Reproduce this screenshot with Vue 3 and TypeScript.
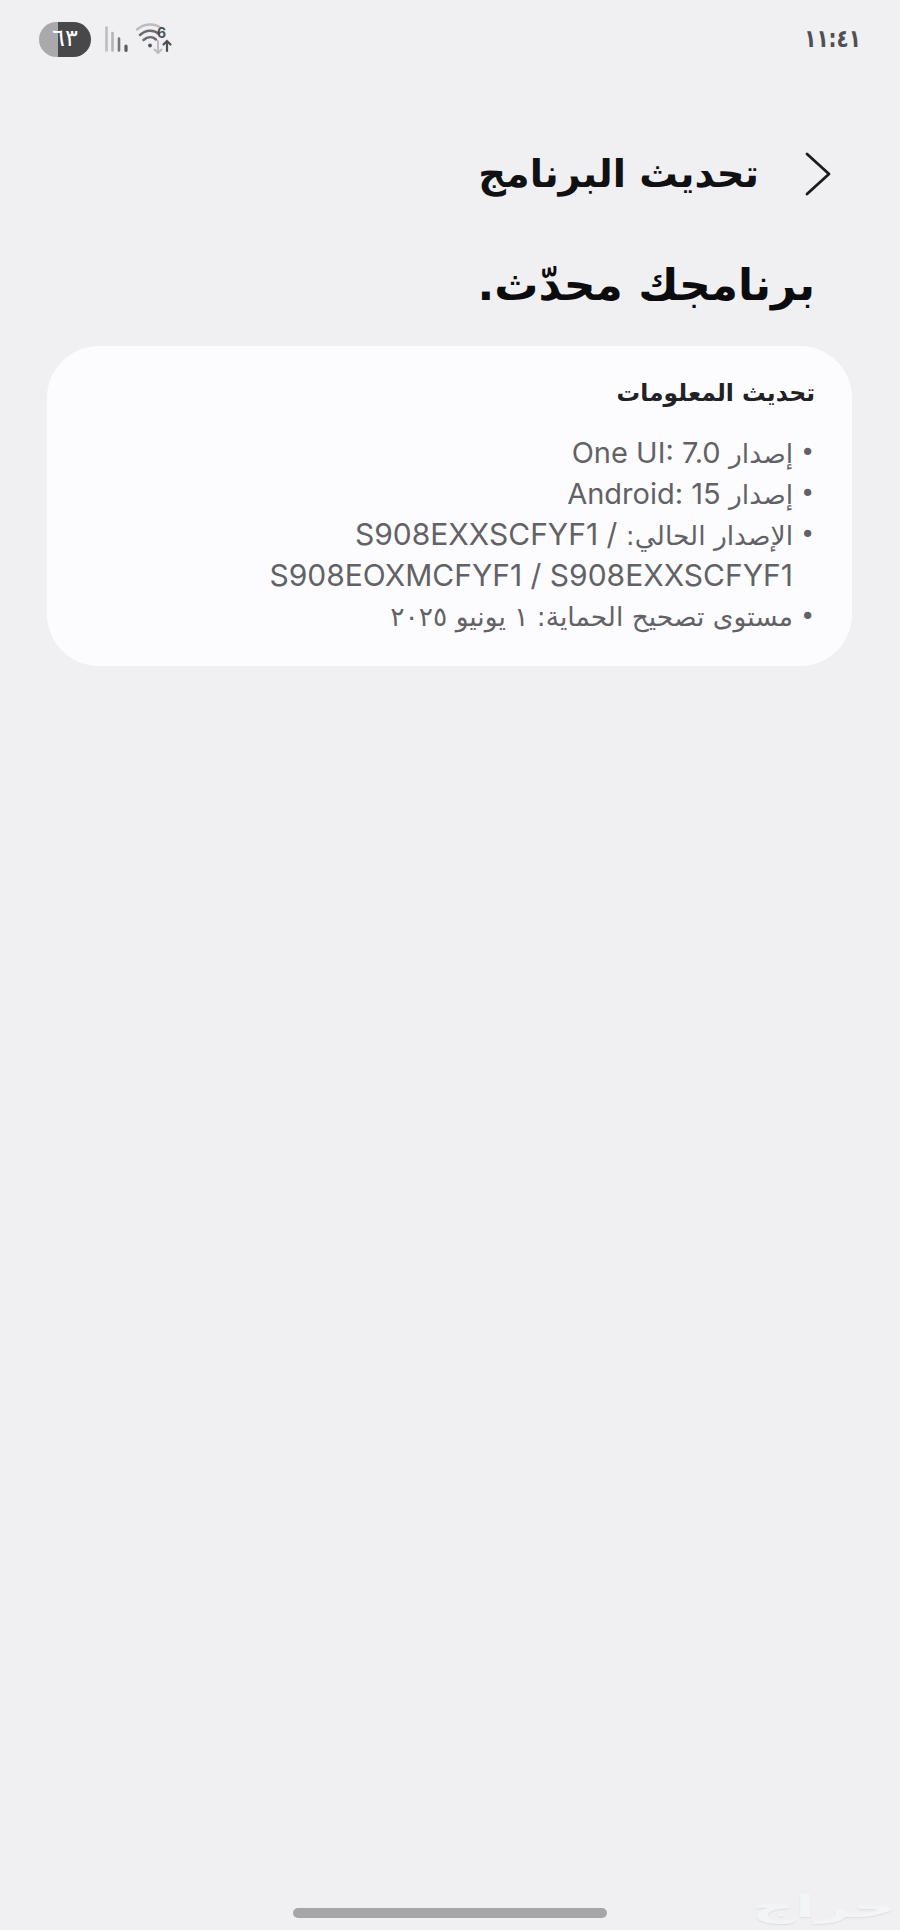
<script setup lang="ts">
interface Part { t: string; k: 'ar' | 'lat' | 'code' }
const items: Part[][][] = [
  [[{ t: 'إصدار ', k: 'ar' }, { t: 'One UI: 7.0', k: 'lat' }]],
  [[{ t: 'إصدار ', k: 'ar' }, { t: 'Android: 15', k: 'lat' }]],
  [
    [{ t: 'الإصدار الحالي: ', k: 'ar' }, { t: '/ S908EXXSCFYF1', k: 'code' }],
    [{ t: 'S908EOXMCFYF1 / S908EXXSCFYF1', k: 'code' }],
  ],
  [[{ t: 'مستوى تصحيح الحماية: ١ يونيو ٢٠٢٥', k: 'ar' }]],
]
</script>

<template>
  <div class="page" dir="rtl">
    <header class="status">
      <span class="time">١١:٤١</span>
      <div class="indicators" dir="ltr">
        <span class="battery">٦٣</span>
        <svg class="net" width="70" height="36" viewBox="0 0 70 36" aria-hidden="true">
          <g stroke-linecap="round" fill="none">
            <path d="M2.5 6.5V29.5" stroke="#bdbdbf" stroke-width="2.6" />
            <path d="M8.5 12V29.5" stroke="#b4b4b6" stroke-width="2.6" />
            <path d="M15 17.5V29.5" stroke="#77777a" stroke-width="2.6" />
            <path d="M22 25V29.5" stroke="#5c5c60" stroke-width="3.2" />
            <path d="M33 8.5C40 2 51 2 57 7" stroke="#bcbcbe" stroke-width="2.5" />
            <path d="M36 14C42 8.5 50 8.5 55 13" stroke="#6b6b6f" stroke-width="2.5" />
            <path d="M39.5 19C43.5 15.5 48.5 15.5 52 18.5" stroke="#6b6b6f" stroke-width="2.5" />
            <circle cx="46" cy="24.5" r="1.9" fill="#55555a" />
            <path d="M54 20V32M50.5 28.5L54 32L57.5 28.5" stroke="#bcbcbe" stroke-width="2" />
            <path d="M63 30V20M59.5 23.5L63 20L66.5 23.5" stroke="#4f4f53" stroke-width="2.2" />
          </g>
          <text x="53" y="17" class="six">6</text>
        </svg>
      </div>
    </header>

    <div class="titlebar">
      <svg class="chev" width="26" height="44" viewBox="0 0 26 44" aria-hidden="true">
        <path d="M2 2L24 22L2 42" fill="none" stroke="#1c1c1e" stroke-width="2.8" stroke-linecap="round" stroke-linejoin="round" />
      </svg>
      <h2 class="title">تحديث البرنامج</h2>
    </div>

    <h1 class="headline">برنامجك محدّث.</h1>

    <section class="card">
      <h3 class="card-title">تحديث المعلومات</h3>
      <ul class="list">
        <li v-for="(item, i) in items" :key="i" class="row">
          <span class="dot">•</span>
          <div class="text">
            <div v-for="(line, l) in item" :key="l" class="line"><span v-for="(p, j) in line" :key="j" :class="p.k">{{ p.t }}</span></div>
          </div>
        </li>
      </ul>
    </section>

    <div class="spacer"></div>
    <div class="home"></div>
    <div class="mark" dir="rtl">حراج</div>
  </div>
</template>

<style>
html, body { margin: 0; background: #f0f0f3; }
</style>

<style scoped>
.page {
  position: relative;
  width: 900px;
  height: 1930px;
  box-sizing: border-box;
  display: flex;
  flex-direction: column;
  overflow: hidden;
  background: #f0f0f3;
  font-family: "DejaVu Sans", "Noto Sans", sans-serif;
}
.status {
  display: flex;
  justify-content: space-between;
  align-items: center;
  height: 36px;
  margin-top: 21px;
  padding: 0 39px 0 39px;
}
.time {
  display: inline-block;
  font-size: 25px;
  letter-spacing: -1px;
  color: #505054;
  font-weight: 700;
  line-height: 36px;
  direction: ltr;
  unicode-bidi: isolate;
  transform: scaleX(0.8);
  transform-origin: right center;
}
.indicators {
  display: flex;
  align-items: center;
  gap: 13px;
}
.battery {
  width: 52px;
  height: 35px;
  border-radius: 18px;
  background: linear-gradient(90deg, #a9a9ab 0 37%, #48484a 37% 100%);
  color: #fff;
  font-size: 24px;
  line-height: 33px;
  text-align: center;
}
.six {
  font-family: "Inter", sans-serif;
  font-size: 14px;
  font-weight: 700;
  fill: #4f4f53;
}
.titlebar {
  display: flex;
  align-items: center;
  gap: 46px;
  margin-top: 95px;
  padding-right: 69px;
  height: 44px;
}
.title {
  margin: 0;
  font-size: 38.5px;
  font-weight: 700;
  line-height: 44px;
  color: #111113;
}
.headline {
  margin: 61px 0 0;
  padding-right: 85px;
  font-size: 44px;
  font-weight: 700;
  line-height: 56px;
  color: #0c0c0e;
}
.card {
  margin: 33px 48px 0 47px;
  height: 320px;
  box-sizing: border-box;
  padding: 29px 37px 0 0;
  border-radius: 52px;
  background: #fcfcfe;
}
.card-title {
  margin: 0;
  font-size: 23.5px;
  font-weight: 700;
  line-height: 36px;
  color: #222225;
}
.list {
  list-style: none;
  margin: 21px 0 0;
  padding: 0;
}
.row {
  display: flex;
  font-size: 26.5px;
  line-height: 41px;
  color: #626266;
}
.dot {
  width: 22px;
  flex: none;
  text-align: right;
  font-size: 25px;
  padding-right: 0;
}
.line { height: 41px; white-space: nowrap; }
.lat {
  font-family: "Inter", sans-serif;
  font-size: 29px;
}
.code {
  font-family: "Inter", sans-serif;
  font-size: 30px;
}
.spacer { flex: 1; }
.home {
  width: 314px;
  height: 10px;
  margin: 0 auto 12px;
  border-radius: 5px;
  background: #a6a6a8;
}
.mark {
  position: absolute;
  right: 2px;
  bottom: 8px;
  width: 74px;
  height: 30px;
  font-size: 30px;
  line-height: 30px;
  font-weight: 700;
  text-align: center;
  color: #f3f4f6;
  text-shadow: 0 1px 1px #dcdde0;
  transform: scaleX(2);
  transform-origin: right center;
  white-space: nowrap;
}
</style>
